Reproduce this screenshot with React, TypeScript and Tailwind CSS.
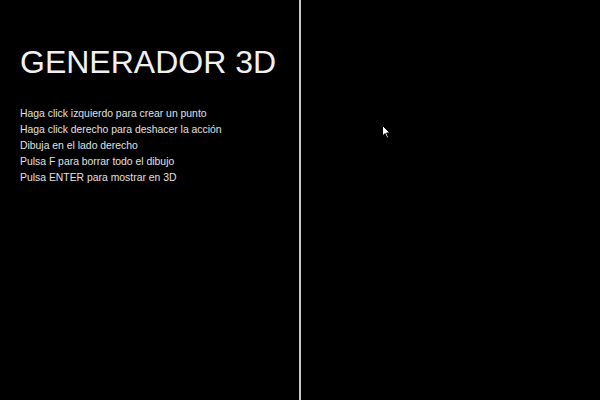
import React from "react";

export default function App() {
  const lines = [
    "Haga click izquierdo para crear un punto",
    "Haga click derecho para deshacer la acción",
    "Dibuja en el lado derecho",
    "Pulsa F para borrar todo el dibujo",
    "Pulsa ENTER para mostrar en 3D",
  ];
  return (
    <div className="w-[600px] h-[400px] bg-black flex" style={{ fontFamily: '"Liberation Sans", Arial, sans-serif' }}>
      <div className="w-[299px] h-full pl-5 pt-[43px]">
        <div className="text-[32px] leading-[38px] text-[#f0f0f0]">GENERADOR 3D</div>
        <div className="mt-[25px] flex flex-col">
          {lines.map((l) => (
            <div key={l} className="text-[10.4px] leading-[16px] text-[#e0e0e0]">{l}</div>
          ))}
        </div>
      </div>
      <div className="w-[2px] h-full bg-[#c8c8c8]" />
      <div className="flex-1 h-full relative">
        <svg className="absolute left-[81px] top-[125px]" width="10" height="14" viewBox="0 0 10 14">
          <path d="M0.5 0.5 L0.5 11 L3 8.5 L5 13 L6.5 12.3 L4.6 8 L8 8 Z" fill="#fff" stroke="#000" strokeWidth="1" />
        </svg>
      </div>
    </div>
  );
}
